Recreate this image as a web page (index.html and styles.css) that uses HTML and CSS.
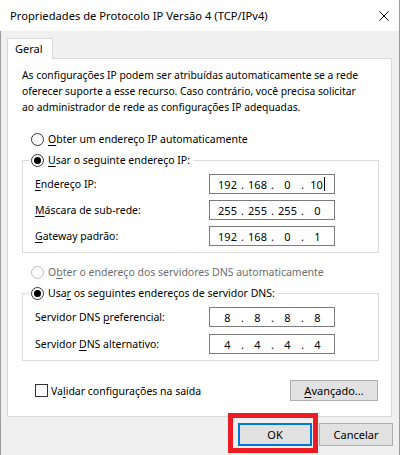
FILE: index.html
```html
<!DOCTYPE html>
<html lang="pt-BR">
<head>
<meta charset="utf-8">
<title>Propriedades de Protocolo IP Versão 4 (TCP/IPv4)</title>
<link rel="stylesheet" href="styles.css">
</head>
<body>
<div class="window">
  <div class="titlebar">
    <span class="title">Propriedades de Protocolo IP Versão 4 (TCP/IPv4)</span>
    <svg class="close" width="10" height="10" viewBox="0 0 10 10" aria-hidden="true"><path d="M0.5 0.5L9.5 9.5M9.5 0.5L0.5 9.5" stroke="#000" stroke-width="1" fill="none"/></svg>
  </div>
  <div class="client">
    <div class="tabs"><div class="tab">Geral</div></div>
    <div class="panel">
      <p class="intro">As configurações IP podem ser atribuídas automaticamente se a rede<br>oferecer suporte a esse recurso. Caso contrário, você precisa solicitar<br>ao administrador de rede as configurações IP adequadas.</p>

      <div class="radio-row first"><span class="radio"></span><span><u>O</u>bter um endereço IP automaticamente</span></div>

      <fieldset class="group g1">
        <legend class="legend"><span class="radio checked"></span><span><u>U</u>sar o seguinte endereço IP:</span></legend>
        <div class="field-row"><span><u>E</u>ndereço IP:</span>
          <div class="ipbox"><span class="oct">192</span><span class="dot">.</span><span class="oct">168</span><span class="dot">.</span><span class="oct">0</span><span class="dot">.</span><span class="oct">10<span class="caret"></span></span></div></div>
        <div class="field-row"><span><u>M</u>áscara de sub-rede:</span>
          <div class="ipbox"><span class="oct">255</span><span class="dot">.</span><span class="oct">255</span><span class="dot">.</span><span class="oct">255</span><span class="dot">.</span><span class="oct">0</span></div></div>
        <div class="field-row"><span><u>G</u>ateway padrão:</span>
          <div class="ipbox"><span class="oct">192</span><span class="dot">.</span><span class="oct">168</span><span class="dot">.</span><span class="oct">0</span><span class="dot">.</span><span class="oct">1</span></div></div>
      </fieldset>

      <div class="radio-row dns-auto disabled"><span class="radio"></span><span>O<u>b</u>ter o endereço dos servidores DNS automaticamente</span></div>

      <fieldset class="group g2">
        <legend class="legend"><span class="radio checked"></span><span>Usa<u>r</u> os seguintes endereços de servidor DNS:</span></legend>
        <div class="field-row"><span>Servidor DNS <u>p</u>referencial:</span>
          <div class="ipbox"><span class="oct">8</span><span class="dot">.</span><span class="oct">8</span><span class="dot">.</span><span class="oct">8</span><span class="dot">.</span><span class="oct">8</span></div></div>
        <div class="field-row"><span>Servidor <u>D</u>NS alternativo:</span>
          <div class="ipbox"><span class="oct">4</span><span class="dot">.</span><span class="oct">4</span><span class="dot">.</span><span class="oct">4</span><span class="dot">.</span><span class="oct">4</span></div></div>
      </fieldset>

      <div class="check-row">
        <label class="check"><span class="box"></span><span>Va<u>l</u>idar configurações na saída</span></label>
        <button class="btn adv" type="button"><u>A</u>vançado...</button>
      </div>
    </div>
    <div class="footer">
      <div class="ok-wrap">
        <button class="btn ok" type="button">OK</button>
        <span class="highlight"></span>
      </div>
      <button class="btn" type="button">Cancelar</button>
    </div>
  </div>
</div>
</body>
</html>
```
FILE: styles.css
```css
html, body {
  margin: 0;
  padding: 0;
  background: #f0f0f0;
}
body {
  font-family: "Noto Sans", "Open Sans", sans-serif;
  font-size: 10.5px;
  color: #000;
}
u { text-decoration-thickness: 1px; text-underline-offset: 2px; }

.window {
  width: 400px;
  height: 455px;
  box-sizing: border-box;
  background: #f0f0f0;
  border-right: 1px solid #9c9c9c;
  display: flex;
  flex-direction: column;
  overflow: hidden;
}

.titlebar {
  height: 31px;
  flex: none;
  background: #fff;
  display: flex;
  align-items: center;
  padding-left: 10px;
}
.title { line-height: 16px; font-size: 11.2px; }
.close { margin-left: auto; margin-right: 10px; }

.client {
  flex: 1;
  border-left: 1px solid #9c9c9c;
  padding: 7px 6px 0 6px;
}

.tabs { display: flex; }
.tab {
  position: relative;
  z-index: 1;
  box-sizing: border-box;
  width: 46px;
  height: 21px;
  margin-bottom: -1px;
  border: 1px solid #d9d9d9;
  border-bottom: none;
  background: #fff;
  padding-left: 7px;
  line-height: 19px;
  font-size: 11px;
}

.panel {
  box-sizing: border-box;
  width: 385px;
  height: 359px;
  border: 1px solid #d9d9d9;
  background: #fff;
  padding: 8px 0 0 14px;
}

.intro { margin: 0; line-height: 16px; white-space: nowrap; font-size: 10.3px; }

.radio-row {
  display: flex;
  align-items: center;
  gap: 4px;
  height: 16px;
  line-height: 16px;
  margin-left: 9px;
  white-space: nowrap;
}
.radio-row.first { margin-top: 16px; }
.radio-row.dns-auto { margin-top: 11px; }
.disabled { color: #6d6d6d; }
.disabled .radio { border-color: #bcbcbc; }

.radio {
  box-sizing: border-box;
  width: 13px;
  height: 13px;
  border: 1px solid #333;
  border-radius: 50%;
  background: #fff;
  display: flex;
  align-items: center;
  justify-content: center;
  flex: none;
}
.radio.checked::after {
  content: "";
  width: 7px;
  height: 7px;
  border-radius: 50%;
  background: #000;
}

.group {
  box-sizing: border-box;
  width: 357px;
  min-width: 0;
  margin: 0;
  padding: 6px 0 6px 0;
  border: 1px solid #dcdcdc;
}
.g1 { margin-top: 5px; }
.g2 { margin-top: 5px; }

.legend {
  display: flex;
  align-items: center;
  gap: 4px;
  height: 16px;
  line-height: 16px;
  margin-left: 7px;
  padding: 0 3px 0 1px;
  white-space: nowrap;
}

.field-row {
  display: flex;
  align-items: center;
  justify-content: space-between;
  height: 20px;
  padding: 0 43px 0 12px;
  white-space: nowrap;
}
.g1 .field-row + .field-row { margin-top: 6px; }
.g2 .field-row + .field-row { margin-top: 7px; }

.ipbox {
  box-sizing: border-box;
  width: 126px;
  height: 20px;
  border: 1px solid #7a7a7a;
  background: #fff;
  padding-left: 6px;
  display: flex;
  align-items: center;
  font-size: 11px;
}
.oct {
  width: 23px;
  text-align: center;
  display: flex;
  align-items: center;
  justify-content: center;
}
.dot { width: 7px; text-align: center; }
.caret {
  display: inline-block;
  width: 1px;
  height: 14px;
  background: #000;
  margin-left: 1px;
}

.check-row {
  width: 357px;
  margin-top: 19px;
  display: flex;
  align-items: center;
  justify-content: space-between;
  white-space: nowrap;
}
.check {
  display: flex;
  align-items: center;
  gap: 3px;
  padding-left: 13px;
}
.box {
  box-sizing: border-box;
  width: 13px;
  height: 13px;
  border: 1px solid #333;
  background: #fff;
}

.btn {
  box-sizing: border-box;
  font: inherit;
  font-size: 11px;
  color: #000;
  background: #e1e1e1;
  border: 1px solid #adadad;
  border-radius: 0;
  padding: 0;
  height: 23px;
  width: 74px;
  white-space: nowrap;
}
.btn.adv {
  width: 88px;
  height: 21px;
  margin-right: 1px;
}
.btn.ok { border: 2px solid #0078d7; }

.footer {
  margin-top: 6px;
  display: flex;
  justify-content: flex-end;
  gap: 7px;
}
.ok-wrap { position: relative; display: flex; }
.highlight {
  position: absolute;
  left: -10px;
  top: -10px;
  width: 90px;
  height: 40px;
  box-sizing: border-box;
  border: 5px solid #ec1c24;
  pointer-events: none;
}
```
